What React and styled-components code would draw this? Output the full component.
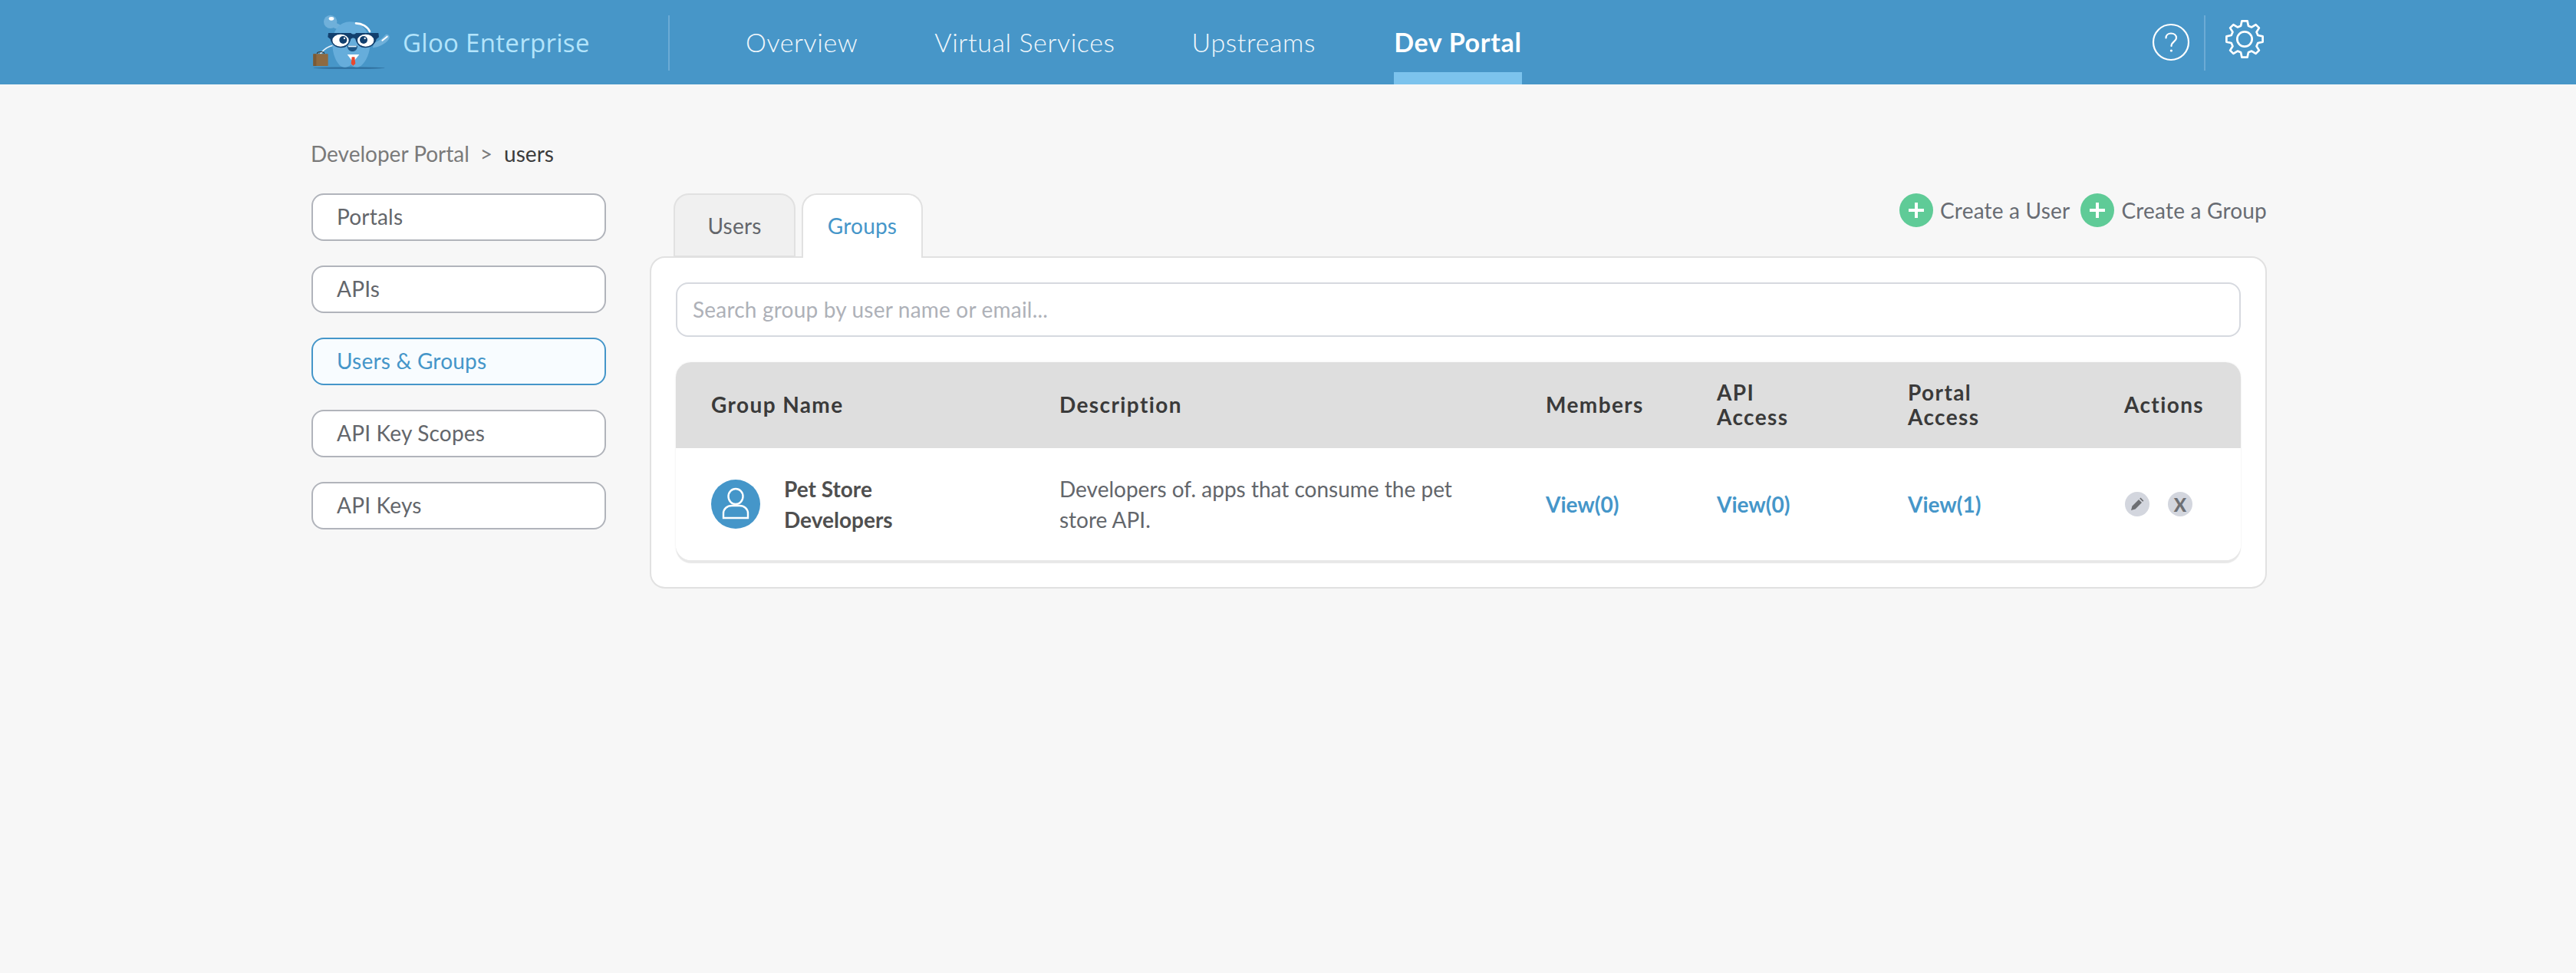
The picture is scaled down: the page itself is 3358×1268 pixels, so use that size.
import React from 'react';
import styled, { createGlobalStyle } from 'styled-components';

const GlobalStyle = createGlobalStyle`
  html, body {
    margin: 0;
    padding: 0;
    background: #f7f7f7;
  }
  body {
    font-family: 'Lato', 'Liberation Sans', sans-serif;
    color: #63666b;
  }
  * {
    box-sizing: border-box;
  }
`;

const Page = styled.div`
  min-height: 1268px;
  background: #f7f7f7;
`;

const Header = styled.header`
  height: 110px;
  background: #4796c8;
  display: flex;
  align-items: stretch;
  padding-left: 400px;
`;

const Brand = styled.div`
  width: 471px;
  display: flex;
  align-items: center;
  gap: 10px;
  color: #b3e4fb;
  font-family: 'Open Sans', sans-serif;
  font-weight: 400;
  font-size: 33px;
  letter-spacing: 0.3px;
`;

const BrandMark = styled.svg`
  width: 115px;
  height: 80px;
  flex: none;
`;

const VDivider = styled.div`
  width: 2px;
  height: 72px;
  margin-top: 20px;
  background: #6cabd5;
  flex: none;
`;

const Nav = styled.nav`
  display: flex;
  gap: 100px;
  margin-left: 99px;
`;

const NavItem = styled.a`
  height: 110px;
  line-height: 110px;
  margin-left: ${(p) => (p.$active ? '2px' : '0')};
  font-size: 34px;
  font-weight: ${(p) => (p.$active ? 700 : 300)};
  letter-spacing: ${(p) => (p.$active ? '0.7px' : '0.6px')};
  color: ${(p) => (p.$active ? '#fff' : '#f2f8fc')};
  border-bottom: ${(p) => (p.$active ? '16px solid #7cc3ed' : 'none')};
  white-space: nowrap;
`;

const HeaderTools = styled.div`
  margin-left: auto;
  margin-right: 405px;
  display: flex;
  align-items: flex-start;
`;

const HelpIcon = styled.svg`
  width: 50px;
  height: 50px;
  margin-top: 30px;
`;

const GearIcon = styled.svg`
  width: 54px;
  height: 54px;
  margin: 24px 0 0 24px;
`;

const ToolDivider = styled(VDivider)`
  margin-left: 18px;
`;

const Main = styled.main`
  padding: 72px 403px 0 406px;
`;

const Breadcrumb = styled.div`
  height: 36px;
  line-height: 36px;
  margin-left: -1px;
  font-size: 28px;
  color: #7a7a7a;
  display: flex;
`;

const Chevron = styled.span`
  margin: 0 15px 0 14px;
`;

const Current = styled.span`
  color: #3c3c3c;
`;

const Columns = styled.div`
  display: flex;
  margin-top: 34px;
`;

const Sidebar = styled.aside`
  width: 384px;
  flex: none;
  display: flex;
  flex-direction: column;
  gap: 32px;
`;

const SideButton = styled.a`
  height: 62px;
  line-height: 57px;
  padding-left: 31px;
  border-radius: 16px;
  font-size: 28px;
  letter-spacing: 0.2px;
  background: ${(p) => (p.$active ? '#f8fcff' : '#fff')};
  color: ${(p) => (p.$active ? '#4596c9' : '#63666b')};
  border: 2px solid ${(p) => (p.$active ? '#4596c9' : '#b1b4bb')};
`;

const Content = styled.section`
  flex: 1;
  margin-left: 57px;
`;

const TopRow = styled.div`
  height: 84px;
  display: flex;
  align-items: flex-start;
  padding-left: 31px;
  margin-bottom: -2px;
  position: relative;
  z-index: 1;
`;

const Tab = styled.div`
  height: ${(p) => (p.$active ? '84px' : '83px')};
  width: ${(p) => (p.$active ? '158px' : '159px')};
  margin-right: 8px;
  line-height: 80px;
  text-align: center;
  font-size: 28px;
  letter-spacing: 0.2px;
  border: 2px solid #e1e1e1;
  border-bottom: ${(p) => (p.$active ? 'none' : '2px solid #e1e1e1')};
  border-radius: 20px 20px 0 0;
  background: ${(p) => (p.$active ? '#fff' : '#f0f0f0')};
  color: ${(p) => (p.$active ? '#4596c9' : '#63666b')};
`;

const CreateActions = styled.div`
  margin-left: auto;
  display: flex;
  gap: 14px;
`;

const CreateAction = styled.a`
  display: flex;
  align-items: center;
  gap: 9px;
  height: 44px;
  font-size: 28px;
  letter-spacing: 0.2px;
  color: #686c73;
`;

const PlusCircle = styled.span`
  width: 44px;
  height: 44px;
  border-radius: 50%;
  background: #5fcb97;
  display: flex;
  align-items: center;
  justify-content: center;
  flex: none;
`;

const Panel = styled.div`
  background: #fff;
  border: 2px solid #e1e1e1;
  border-radius: 20px;
  padding: 32px 32px 35px;
`;

const Search = styled.div`
  height: 71px;
  line-height: 66px;
  padding-left: 20px;
  border: 2px solid #d6d9df;
  border-radius: 16px;
  font-size: 28px;
  letter-spacing: 0.2px;
  color: #aeb1b8;
`;

const Table = styled.div`
  margin-top: 33px;
  border-radius: 20px;
  overflow: hidden;
  background: #fff;
  box-shadow: 0 4px 1px #e8e8e8, 0 0 3px #f0f0f0;
`;

const Row = styled.div`
  display: grid;
  grid-template-columns: 454px 634px 223px 249px 282px 1fr;
  align-items: center;
  padding-left: 46px;
  height: ${(p) => p.$height}px;
  background: ${(p) => p.$bg || '#fff'};
`;

const HeadCell = styled.div`
  font-size: 28px;
  font-weight: 700;
  line-height: 32px;
  letter-spacing: 1.4px;
  color: #3a3a3a;
  margin-top: -2px;
`;

const NameCell = styled.div`
  display: flex;
  align-items: center;
  gap: 31px;
  font-weight: 700;
  font-size: 28px;
  line-height: 40px;
  color: #4f4f4f;
`;

const NameText = styled.div`
  margin-top: -1px;
`;

const Avatar = styled.span`
  width: 64px;
  height: 64px;
  flex: none;
  border-radius: 50%;
  background: #4596c9;
  display: flex;
  align-items: center;
  justify-content: center;
`;

const Description = styled.div`
  font-size: 28px;
  line-height: 40px;
  width: 540px;
  margin-top: -1px;
  color: #63666b;
`;

const ViewLink = styled.a`
  font-size: 28px;
  font-weight: 700;
  margin-top: -1px;
  color: #4596c9;
`;

const ActionIcons = styled.div`
  display: flex;
  gap: 24px;
  padding-left: 1px;
`;

const ActionButton = styled.span`
  width: 32px;
  height: 32px;
  border-radius: 50%;
  background: #d3d6de;
  color: #6d6f73;
  display: flex;
  align-items: center;
  justify-content: center;
  font-size: 24px;
  font-weight: 900;
`;

const Mascot = () => (
  <BrandMark viewBox="0 0 345 240">
    <ellipse cx="165" cy="221" rx="140" ry="3.5" fill="#2f6f9d" />
    <path d="M110 42 L150 62 L140 78 L96 60 Z" fill="#6fb0da" />
    <circle cx="92" cy="40" r="26" fill="#6fb0da" />
    <ellipse cx="96" cy="28" rx="10" ry="7" fill="#fff" />
    <path d="M262 122 C285 115 300 100 308 90 C322 86 328 100 318 112 C305 128 280 140 258 142 Z" fill="#6fb0da" />
    <path d="M295 113 L314 98" stroke="#fff" strokeWidth="6" strokeLinecap="round" />
    <path d="M104 132 C84 136 66 148 54 164" stroke="#e8f4fb" strokeWidth="5" fill="none" strokeLinecap="round" />
    <path d="M168 40 C215 40 245 80 247 125 C248 160 232 195 212 212 C196 222 180 218 172 208 C162 220 140 222 128 210 C108 190 98 150 100 115 C102 75 130 40 168 40 Z" fill="#66addb" />
    <path d="M192 46 C216 46 238 60 246 78" stroke="#fff" strokeWidth="8" fill="none" strokeLinecap="round" />
    <path d="M40 165 C40 155 68 155 68 165" stroke="#35322e" strokeWidth="3.5" fill="none" />
    <rect x="25" y="166" width="58" height="47" rx="2" fill="#8e6a41" />
    <rect x="25" y="166" width="12" height="47" fill="#7a5a36" />
    <path d="M84 84 H172 C178 90 188 90 192 84 H280 L282 100 L272 108 C268 128 250 142 228 142 C206 142 194 126 190 108 C186 102 176 102 172 108 C168 126 156 142 134 142 C112 142 96 128 92 108 L82 100 Z" fill="#123f6d" />
    <ellipse cx="132" cy="113" rx="32" ry="24" fill="#fff" />
    <ellipse cx="230" cy="113" rx="32" ry="24" fill="#fff" />
    <circle cx="142" cy="111" r="15" fill="#123f6d" />
    <circle cx="222" cy="111" r="15" fill="#123f6d" />
    <circle cx="147" cy="105" r="3.5" fill="#fff" />
    <circle cx="227" cy="105" r="3.5" fill="#fff" />
    <path d="M158 134 H198 C198 150 186 156 178 156 C168 156 158 148 158 134 Z" fill="#1c5585" />
    <rect x="162" y="134" width="32" height="5" fill="#e8f4fb" />
    <path d="M158 168 L205 168 L186 192 H176 Z" fill="#fff" />
    <path d="M176 178 H187 L190 204 L181 212 L173 204 Z" fill="#e8482f" />
  </BrandMark>
);

const Plus = () => (
  <svg width="22" height="22" viewBox="0 0 22 22">
    <path d="M11 1v20M1 11h20" stroke="#fff" strokeWidth="4" />
  </svg>
);

const UserGlyph = () => (
  <svg width="44" height="44" viewBox="0 0 44 44" fill="none" stroke="#fff" strokeWidth="2.4">
    <ellipse cx="22" cy="12" rx="9.5" ry="10" />
    <path d="M6 40 H38 V34 C38 28 33 24 27 24 H17 C11 24 6 28 6 34 Z" />
  </svg>
);

const Pencil = () => (
  <svg width="18" height="18" viewBox="0 0 18 18" fill="#6d6f73">
    <path d="M1 17 L2.5 11.5 L11 3 L15 7 L6.5 15.5 Z" />
    <path d="M12.2 1.8 L13.5 0.6 L17.4 4.5 L16.2 5.8 Z" />
  </svg>
);

const App = () => (
  <Page>
    <GlobalStyle />
    <Header>
      <Brand>
        <Mascot />
        Gloo Enterprise
      </Brand>
      <VDivider />
      <Nav>
        <NavItem>Overview</NavItem>
        <NavItem>Virtual Services</NavItem>
        <NavItem>Upstreams</NavItem>
        <NavItem $active>Dev Portal</NavItem>
      </Nav>
      <HeaderTools>
        <HelpIcon viewBox="0 0 50 50" fill="none" stroke="#fff" strokeWidth="2.2">
          <circle cx="25" cy="25" r="23" />
          <path d="M18.5 19.5 C18.5 15.5 21.5 13.5 25 13.5 C29 13.5 32 16 32 19.5 C32 24 25.5 24.5 25.5 30" strokeLinecap="round" />
          <circle cx="25.4" cy="36" r="1.6" fill="#fff" stroke="none" />
        </HelpIcon>
        <ToolDivider />
        <GearIcon viewBox="0 0 24 24" fill="none" stroke="#fff" strokeWidth="1.2" strokeLinejoin="round">
          <circle cx="12" cy="12" r="4.3" />
          <path d="M10.4 1.5 H13.6 L14.2 4.3 L16.1 5.1 L18.5 3.6 L20.4 5.5 L18.9 7.9 L19.7 9.8 L22.5 10.4 V13.6 L19.7 14.2 L18.9 16.1 L20.4 18.5 L18.5 20.4 L16.1 18.9 L14.2 19.7 L13.6 22.5 H10.4 L9.8 19.7 L7.9 18.9 L5.5 20.4 L3.6 18.5 L5.1 16.1 L4.3 14.2 L1.5 13.6 V10.4 L4.3 9.8 L5.1 7.9 L3.6 5.5 L5.5 3.6 L7.9 5.1 L9.8 4.3 Z" />
        </GearIcon>
      </HeaderTools>
    </Header>
    <Main>
      <Breadcrumb>
        Developer Portal
        <Chevron>&gt;</Chevron>
        <Current>users</Current>
      </Breadcrumb>
      <Columns>
        <Sidebar>
          <SideButton>Portals</SideButton>
          <SideButton>APIs</SideButton>
          <SideButton $active>Users &amp; Groups</SideButton>
          <SideButton>API Key Scopes</SideButton>
          <SideButton>API Keys</SideButton>
        </Sidebar>
        <Content>
          <TopRow>
            <Tab>Users</Tab>
            <Tab $active>Groups</Tab>
            <CreateActions>
              <CreateAction>
                <PlusCircle><Plus /></PlusCircle>
                Create a User
              </CreateAction>
              <CreateAction>
                <PlusCircle><Plus /></PlusCircle>
                Create a Group
              </CreateAction>
            </CreateActions>
          </TopRow>
          <Panel>
            <Search>Search group by user name or email...</Search>
            <Table>
              <Row $height={112} $bg="#dedede">
                <HeadCell>Group Name</HeadCell>
                <HeadCell>Description</HeadCell>
                <HeadCell>Members</HeadCell>
                <HeadCell>API<br />Access</HeadCell>
                <HeadCell>Portal<br />Access</HeadCell>
                <HeadCell>Actions</HeadCell>
              </Row>
              <Row $height={146}>
                <NameCell>
                  <Avatar><UserGlyph /></Avatar>
                  <NameText>Pet Store<br />Developers</NameText>
                </NameCell>
                <Description>Developers of. apps that consume the pet store API.</Description>
                <ViewLink>View(0)</ViewLink>
                <ViewLink>View(0)</ViewLink>
                <ViewLink>View(1)</ViewLink>
                <ActionIcons>
                  <ActionButton><Pencil /></ActionButton>
                  <ActionButton>X</ActionButton>
                </ActionIcons>
              </Row>
            </Table>
          </Panel>
        </Content>
      </Columns>
    </Main>
  </Page>
);

export default App;
